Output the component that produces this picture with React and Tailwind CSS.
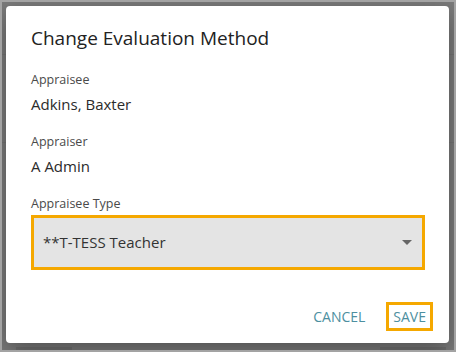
import { useState } from 'react'

const font = { fontFamily: '"Open Sans", "Noto Sans", sans-serif' }

function Field({ label, value }) {
  return (
    <div className="flex flex-col gap-[5px]">
      <p className="text-[12.5px] leading-[18px] text-[#4a4a4a]">{label}</p>
      <p className="text-[15px] leading-[20px] text-[#2b2b2b]">{value}</p>
    </div>
  )
}

export default function App() {
  const [type] = useState('**T-TESS Teacher')

  return (
    <div
      className="relative flex h-[352px] w-[456px] overflow-hidden border-2 border-[#a3a3a3] bg-[#7b7b7b] pb-[7px] pl-[4px] pr-[5px] pt-[4px]"
      style={font}
    >
      {/* page behind the overlay */}
      <div className="absolute left-0 top-[52px] h-px w-full bg-[#747474]" />
      <div className="absolute left-0 top-[140px] h-px w-full bg-[#747474]" />
      <div className="absolute bottom-0 left-[14px] h-[3px] w-[56px] bg-[#707070]" />
      <div className="absolute bottom-0 right-[8px] h-[3px] w-[66px] bg-[#707070]" />

      <div className="relative flex flex-1 flex-col rounded-[4px] bg-white pl-[25px] pr-[24px] pt-[19px] shadow-[0_8px_24px_rgba(0,0,0,0.35)]">
        <h2 className="text-[19px] leading-[26px] text-[#222]">Change Evaluation Method</h2>

        <div className="mt-[20px] flex flex-col gap-[20px]">
          <Field label="Appraisee" value="Adkins, Baxter" />
          <div className="-mt-[1px]">
            <Field label="Appraiser" value="A Admin" />
          </div>
          <div className="-mt-[1px] flex flex-col gap-[2px]">
            <p className="text-[12.5px] leading-[18px] text-[#4a4a4a]">Appraisee Type</p>
            <div className="flex h-[55px] items-center justify-between border-[3px] border-[#f5a800] bg-[#e4e4e4] pl-[9px] pr-[10px]">
              <span className="text-[15px] text-[#333]">{type}</span>
              <svg width="10" height="5" viewBox="0 0 10 5">
                <path d="M0 0h10L5 5z" fill="#666" />
              </svg>
            </div>
          </div>
        </div>

        <div className="-mr-[8px] mb-[12px] mt-auto flex items-center justify-end gap-[21px]">
          <button className="text-[14px] uppercase text-[#4d8fa0]">Cancel</button>
          <button className="border-[3px] border-[#f5a800] px-[4px] py-[1px] text-[14px] uppercase text-[#4d8fa0]">
            Save
          </button>
        </div>
      </div>
    </div>
  )
}
